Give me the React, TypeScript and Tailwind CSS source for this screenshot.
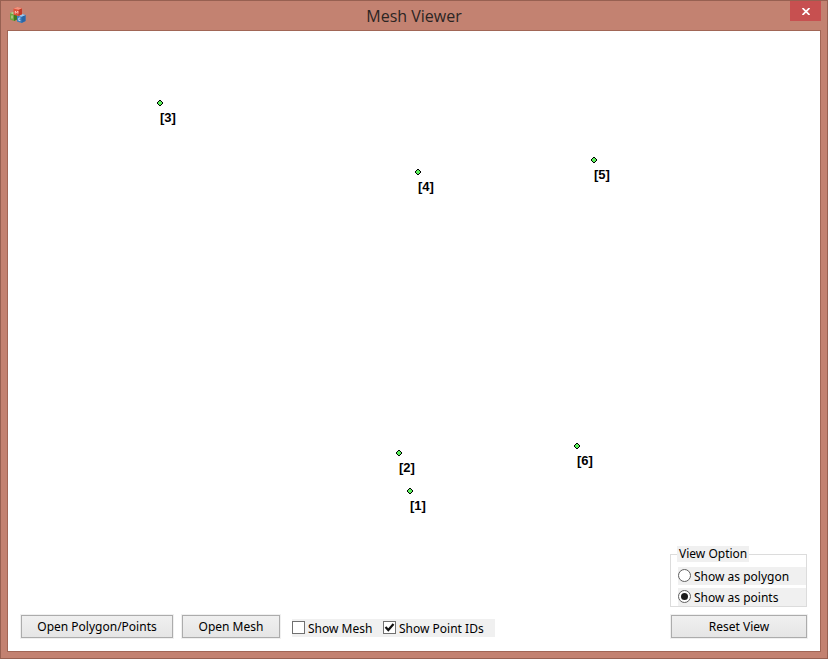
import { useState } from "react";

type Point = { id: number; x: number; y: number };

const initialPoints: Point[] = [
  { id: 1, x: 402, y: 460 },
  { id: 2, x: 391, y: 422 },
  { id: 3, x: 152, y: 72 },
  { id: 4, x: 410, y: 141 },
  { id: 5, x: 586, y: 129 },
  { id: 6, x: 569, y: 415 },
];

function AppIcon() {
  return (
    <svg width="17" height="17" viewBox="0 0 17 17" aria-hidden="true">
      <path d="M1 6 4 5 8 6V12.5L5 14 1 12.5Z" fill="#6fa33f" />
      <path d="M5 7.5 8 6V12.5L5 14Z" fill="#3f7a20" />
      <path d="M1 6 4 5 8 6 5 7.5Z" fill="#b9d69a" />
      <path d="M3 8.5v3" stroke="#d5e8c2" strokeWidth="1" />
      <path d="M8 8.5 12 6.8 16.5 8V14L12.5 16 8 14.5Z" fill="#3f80c0" />
      <path d="M12.5 9.8 16.5 8V14L12.5 16Z" fill="#2a66a6" />
      <path d="M8 8.5 12 6.8 16.5 8 12.5 9.8Z" fill="#a3c8ea" />
      <path d="M11.4 11H9.8v2.4h1.6" stroke="#d8e8f6" strokeWidth=".9" fill="none" />
      <path d="M4.5 1.5 8.5 0 13 1.2V7.2L9.5 9 4.5 7.8Z" fill="#e0523c" />
      <path d="M9.5 2.8 13 1.2V7.2L9.5 9Z" fill="#c23a28" />
      <path d="M4.5 1.5 8.5 0 13 1.2 9.5 2.8Z" fill="#f09580" />
      <path d="M6.3 6.6v-2.4l1.3 1.3 1.3-1.3v2.4" stroke="#fbe3dc" strokeWidth=".8" fill="none" />
    </svg>
  );
}

function PushButton({ className, children }: { className: string; children: string }) {
  return (
    <button
      type="button"
      className={`h-[23px] border border-[#acacac] bg-linear-to-b from-[#f0f0f0] to-[#e5e5e5] leading-5 outline outline-[#f0f0f0] ${className}`}
    >
      {children}
    </button>
  );
}

function CheckOption({ label, checked, onChange }: { label: string; checked: boolean; onChange: (v: boolean) => void }) {
  return (
    <label className="flex h-[18px] gap-[3px] leading-5">
      <span className="relative mt-0.5 block size-[13px]">
        <input
          type="checkbox"
          checked={checked}
          onChange={(e) => onChange(e.target.checked)}
          className="block size-[13px] appearance-none border border-[#707070] bg-white"
        />
        {checked && (
          <svg className="pointer-events-none absolute inset-0" width="13" height="13" viewBox="0 0 13 13">
            <path d="M2.5 6 5.3 9 10.5 3" fill="none" stroke="#111" strokeWidth="2.2" />
          </svg>
        )}
      </span>
      {label}
    </label>
  );
}

function RadioOption({ label, checked, onSelect }: { label: string; checked: boolean; onSelect: () => void }) {
  return (
    <label className="flex h-[18px] gap-[3px] bg-[#f0f0f0] leading-5">
      <span className="relative mt-0.5 block size-[13px]">
        <input
          type="radio"
          name="view-option"
          checked={checked}
          onChange={onSelect}
          className="block size-[13px] appearance-none rounded-full border border-[#606060] bg-white"
        />
        {checked && <span className="pointer-events-none absolute inset-[3px] rounded-full bg-[#1c1c1c]" />}
      </span>
      {label}
    </label>
  );
}

export default function App() {
  const [showMesh, setShowMesh] = useState(false);
  const [showIds, setShowIds] = useState(true);
  const [mode, setMode] = useState<"polygon" | "points">("points");

  return (
    <div className="flex h-screen flex-col border border-[#976051] bg-[#c38271] px-1.5 pb-1.5 font-['Noto_Sans',sans-serif] text-xs text-black">
      <header className="grid h-[29px] shrink-0 grid-cols-[1fr_auto_1fr] items-center">
        <div className="pl-0.5">
          <AppIcon />
        </div>
        <h1 className="font-['Open_Sans',sans-serif] text-base leading-7 text-[#2b2523]">Mesh Viewer</h1>
        <button
          type="button"
          aria-label="Close"
          className="flex h-5 w-[31px] items-center justify-center self-start justify-self-end bg-[#c75050]"
        >
          <svg width="8" height="7" viewBox="0 0 8 7" aria-hidden="true">
            <path d="M.5 0 7.5 7M7.5 0 .5 7" stroke="#fff" strokeWidth="1.7" />
          </svg>
        </button>
      </header>

      <main className="relative flex flex-1 flex-col justify-end border border-[#a16656] bg-white">
        {initialPoints.map((p) => (
          <div key={p.id} className="absolute" style={{ left: p.x, top: p.y }}>
            <svg className="absolute -top-[3px] -left-[3px]" width="6" height="6" viewBox="0 0 6 6" shapeRendering="crispEdges">
              <path d="M2 0h2v1h1v1h1v2h-1v1h-1v1h-2v-1h-1v-1h-1v-2h1v-1h1z" fill="#000" />
              <path d="M2 1h2v1h1v2h-1v1h-2v-1h-1v-2h1z" fill="#5cf05c" />
            </svg>
            {showIds && (
              <span className="absolute top-[7px] left-0 font-['Liberation_Sans',sans-serif] text-[13px] leading-4 font-bold">
                [{p.id}]
              </span>
            )}
          </div>
        ))}

        <div className="flex items-end justify-between px-[13px] pb-[13px]">
          <div className="flex items-end">
            <PushButton className="w-[152px]">Open Polygon/Points</PushButton>
            <PushButton className="ml-[9px] w-[98px]">Open Mesh</PushButton>
            <div className="mb-px ml-3 flex bg-[#f0f0f0]">
              <div className="w-[91px]">
                <CheckOption label="Show Mesh" checked={showMesh} onChange={setShowMesh} />
              </div>
              <div className="w-28">
                <CheckOption label="Show Point IDs" checked={showIds} onChange={setShowIds} />
              </div>
            </div>
          </div>

          <div className="flex w-[137px] flex-col items-end gap-2">
            <fieldset className="w-full border border-[#dcdcdc] pl-[7px]">
              <legend className="-ml-px h-4 bg-[#f0f0f0] px-0.5 leading-4">View Option</legend>
              <div className="flex flex-col gap-[3px] pt-[5px]">
                <RadioOption label="Show as polygon" checked={mode === "polygon"} onSelect={() => setMode("polygon")} />
                <RadioOption label="Show as points" checked={mode === "points"} onSelect={() => setMode("points")} />
              </div>
            </fieldset>
            <PushButton className="w-[136px]">Reset View</PushButton>
          </div>
        </div>
      </main>
    </div>
  );
}
